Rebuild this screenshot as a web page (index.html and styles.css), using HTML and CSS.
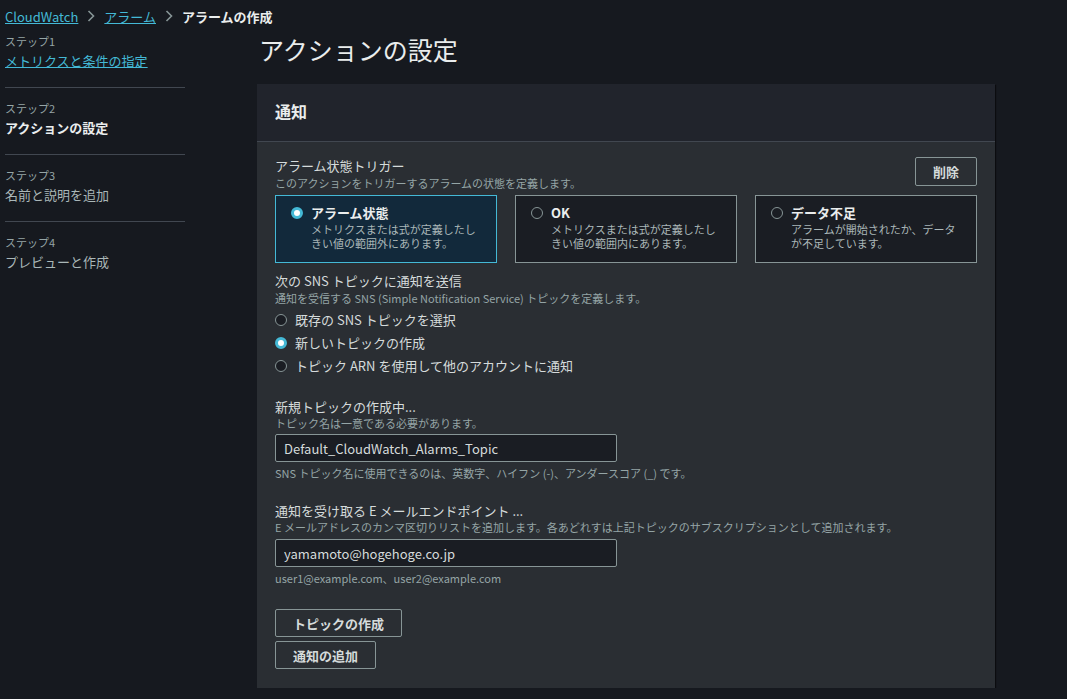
FILE: index.html
```html
<!DOCTYPE html>
<html lang="ja">
<head>
    <meta charset="UTF-8">
    <meta name="viewport" content="width=device-width, initial-scale=1.0">
    <title>アクションの設定</title>
    <link rel="stylesheet" href="styles.css">
</head>
<body>
    <nav class="breadcrumb">
        <a href="#">CloudWatch</a>
        <svg class="chevron" width="8" height="12" viewBox="0 0 8 12"><path d="M1.5 1l5 5-5 5" fill="none" stroke="#879596" stroke-width="1.6"/></svg>
        <a href="#">アラーム</a>
        <svg class="chevron" width="8" height="12" viewBox="0 0 8 12"><path d="M1.5 1l5 5-5 5" fill="none" stroke="#879596" stroke-width="1.6"/></svg>
        <span class="current">アラームの作成</span>
    </nav>

    <div class="layout">
        <ul class="steps">
            <li class="step">
                <div class="step-no">ステップ1</div>
                <a href="#" class="step-name">メトリクスと条件の指定</a>
            </li>
            <li class="step">
                <div class="step-no">ステップ2</div>
                <div class="step-name active">アクションの設定</div>
            </li>
            <li class="step">
                <div class="step-no">ステップ3</div>
                <div class="step-name">名前と説明を追加</div>
            </li>
            <li class="step">
                <div class="step-no">ステップ4</div>
                <div class="step-name">プレビューと作成</div>
            </li>
        </ul>

        <main class="main">
            <h1>アクションの設定</h1>

            <section class="panel">
                <div class="panel-header">通知</div>
                <div class="panel-body">
                    <div class="field-head">
                        <div>
                            <div class="label">アラーム状態トリガー</div>
                            <div class="desc">このアクションをトリガーするアラームの状態を定義します。</div>
                        </div>
                        <button class="btn">削除</button>
                    </div>

                    <div class="tiles">
                        <div class="tile selected">
                            <span class="radio checked"></span>
                            <div>
                                <div class="tile-title">アラーム状態</div>
                                <div class="tile-desc">メトリクスまたは式が定義したしきい値の範囲外にあります。</div>
                            </div>
                        </div>
                        <div class="tile">
                            <span class="radio"></span>
                            <div>
                                <div class="tile-title">OK</div>
                                <div class="tile-desc">メトリクスまたは式が定義したしきい値の範囲内にあります。</div>
                            </div>
                        </div>
                        <div class="tile">
                            <span class="radio"></span>
                            <div>
                                <div class="tile-title">データ不足</div>
                                <div class="tile-desc">アラームが開始されたか、データが不足しています。</div>
                            </div>
                        </div>
                    </div>

                    <div class="field">
                        <div class="label">次の SNS トピックに通知を送信</div>
                        <div class="desc">通知を受信する SNS (Simple Notification Service) トピックを定義します。</div>
                        <div class="radio-group">
                            <div class="radio-row"><span class="radio"></span>既存の SNS トピックを選択</div>
                            <div class="radio-row"><span class="radio checked"></span>新しいトピックの作成</div>
                            <div class="radio-row"><span class="radio"></span>トピック ARN を使用して他のアカウントに通知</div>
                        </div>
                    </div>

                    <div class="field spaced">
                        <div class="label">新規トピックの作成中...</div>
                        <div class="desc tight">トピック名は一意である必要があります。</div>
                        <input class="text-input" type="text" value="Default_CloudWatch_Alarms_Topic">
                        <div class="hint">SNS トピック名に使用できるのは、英数字、ハイフン (-)、アンダースコア (_) です。</div>
                    </div>

                    <div class="field spaced">
                        <div class="label">通知を受け取る E メールエンドポイント ...</div>
                        <div class="desc tight">E メールアドレスのカンマ区切りリストを追加します。各あどれすは上記トピックのサブスクリプションとして追加されます。</div>
                        <input class="text-input email" type="text" value="yamamoto@hogehoge.co.jp">
                        <div class="hint">user1@example.com、user2@example.com</div>
                    </div>

                    <div class="actions">
                        <button class="btn">トピックの作成</button>
                        <button class="btn">通知の追加</button>
                    </div>
                </div>
            </section>
        </main>
    </div>
</body>
</html>
```

FILE: styles.css
```css
body {
    margin: 0;
    background-color: #16191f;
    color: #d5dbdb;
    font-family: "Noto Sans CJK JP", "Noto Sans", sans-serif;
    font-size: 13px;
}
a {
    color: #44b9d6;
}
.breadcrumb {
    display: flex;
    align-items: center;
    height: 32px;
    padding-left: 5px;
    font-size: 13px;
}
.chevron {
    margin: 0 9px;
}
.breadcrumb .current {
    font-weight: bold;
    color: #eaeded;
}
.layout {
    display: flex;
}
.steps {
    list-style: none;
    margin: 0 0 0 5px;
    padding: 0;
    width: 180px;
    flex-shrink: 0;
}
.step {
    padding: 12px 0 16px;
    border-bottom: 1px solid #414750;
}
.step:first-child {
    padding-top: 1px;
}
.step:last-child {
    border-bottom: none;
}
.step-no {
    font-size: 11px;
    line-height: 16px;
    color: #95a5a6;
}
.step-name {
    display: block;
    margin-top: 2px;
    font-size: 13px;
    line-height: 20px;
    color: #aab7b8;
}
a.step-name {
    color: #44b9d6;
}
.step-name.active {
    color: #eaeded;
    font-weight: bold;
}
.main {
    margin-left: 72px;
    width: 738px;
}
h1 {
    margin: 2px 0 20px 2px;
    font-size: 25px;
    line-height: 30px;
    font-weight: normal;
    color: #eaeded;
}
.panel {
    background: #2a2e33;
    box-shadow: 1px 1px 1px rgba(0,0,0,0.5);
}
.panel-header {
    background: #21242c;
    padding: 16px 18px 19px;
    font-size: 16px;
    line-height: 22px;
    font-weight: bold;
    color: #eaeded;
    border-bottom: 1px solid #414750;
}
.panel-body {
    padding: 15px 18px 19px;
}
.field-head {
    display: flex;
    justify-content: space-between;
    align-items: flex-start;
}
.label {
    font-size: 13px;
    line-height: 18px;
    color: #d5dbdb;
}
.desc {
    font-size: 11px;
    line-height: 16px;
    color: #95a5a6;
}
.desc.tight {
    line-height: 14px;
}
.btn {
    height: 29px;
    padding: 0 17px;
    background: transparent;
    border: 1px solid #879596;
    border-radius: 2px;
    color: #d5dbdb;
    font-family: inherit;
    font-size: 13px;
    font-weight: bold;
}
.tiles {
    display: grid;
    grid-template-columns: repeat(3, 1fr);
    gap: 18px;
    margin-top: 4px;
}
.tile {
    display: flex;
    gap: 8px;
    padding: 8px 15px 12px;
    border: 1px solid #879596;
    background: #1a1d23;
}
.tile.selected {
    background: #12293b;
    border-color: #44b9d6;
}
.tile .radio {
    margin-top: 3px;
}
.tile-title {
    font-size: 13px;
    line-height: 18px;
    font-weight: bold;
    color: #eaeded;
}
.tile-desc {
    font-size: 11px;
    line-height: 14px;
    color: #aab7b8;
}
.radio {
    display: inline-block;
    box-sizing: border-box;
    width: 12px;
    height: 12px;
    border: 1px solid #879596;
    border-radius: 50%;
    background: #1a1d23;
    flex-shrink: 0;
}
.radio.checked {
    border: 3.5px solid #44b9d6;
    background: #fff;
}
.field {
    margin-top: 9px;
}
.field.spaced {
    margin-top: 21px;
}
.radio-group {
    margin-top: 2px;
}
.radio-row {
    display: flex;
    align-items: center;
    gap: 8px;
    line-height: 23px;
    font-size: 13px;
    color: #d5dbdb;
}
.text-input {
    display: block;
    box-sizing: border-box;
    width: 342px;
    height: 28px;
    margin-top: 4px;
    padding: 0 8px;
    background: #1a1d23;
    border: 1px solid #879596;
    border-radius: 2px;
    color: #d5dbdb;
    font-family: inherit;
    font-size: 13px;
}
.text-input.email {
    margin-top: 5px;
}
.hint {
    margin-top: 3px;
    font-size: 11px;
    line-height: 16px;
    color: #95a5a6;
}
.actions {
    display: flex;
    flex-direction: column;
    align-items: flex-start;
    gap: 4px;
    margin-top: 23px;
}
.actions .btn {
    height: 28px;
}
```
